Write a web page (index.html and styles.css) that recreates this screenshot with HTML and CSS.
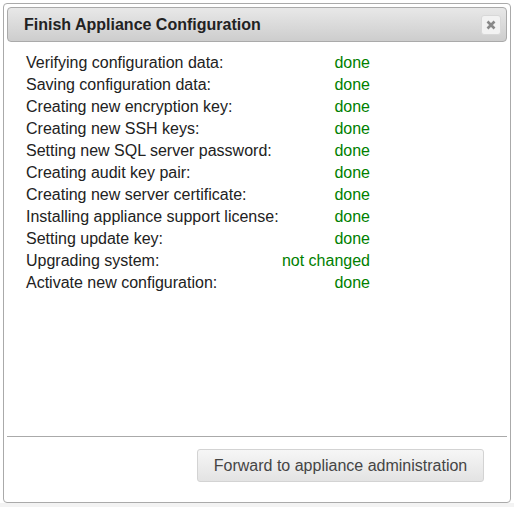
FILE: index.html
```html
<!DOCTYPE html>
<html>
<head>
<meta charset="utf-8">
<link rel="stylesheet" href="styles.css">
</head>
<body>
<div class="dialog">
  <div class="titlebar">
    <span class="title">Finish Appliance Configuration</span>
    <button class="close" aria-label="close">
      <svg width="10" height="10" viewBox="0 0 10 10"><path d="M1.5 1.5 L8.5 8.5 M8.5 1.5 L1.5 8.5" stroke="#888" stroke-width="2.6" stroke-linecap="butt"/></svg>
    </button>
  </div>
  <div class="content">
    <table class="steps">
      <tr><td class="label">Verifying configuration data:</td><td class="status">done</td></tr>
      <tr><td class="label">Saving configuration data:</td><td class="status">done</td></tr>
      <tr><td class="label">Creating new encryption key:</td><td class="status">done</td></tr>
      <tr><td class="label">Creating new SSH keys:</td><td class="status">done</td></tr>
      <tr><td class="label">Setting new SQL server password:</td><td class="status">done</td></tr>
      <tr><td class="label">Creating audit key pair:</td><td class="status">done</td></tr>
      <tr><td class="label">Creating new server certificate:</td><td class="status">done</td></tr>
      <tr><td class="label">Installing appliance support license:</td><td class="status">done</td></tr>
      <tr><td class="label">Setting update key:</td><td class="status">done</td></tr>
      <tr><td class="label">Upgrading system:</td><td class="status">not changed</td></tr>
      <tr><td class="label">Activate new configuration:</td><td class="status">done</td></tr>
    </table>
  </div>
  <div class="buttonpane">
    <button class="btn">Forward to appliance administration</button>
  </div>
</div>
</body>
</html>
```
FILE: styles.css
```css
html, body {
  margin: 0;
  padding: 0;
}
body {
  width: 514px;
  height: 507px;
  background: linear-gradient(to bottom, #fff 503px, #f3f3f3 503px);
  font-family: "Liberation Sans", Arial, sans-serif;
  overflow: hidden;
}
.dialog {
  box-sizing: border-box;
  margin: 3px 0 0 3px;
  width: 508px;
  height: 500px;
  border: 1px solid #aaa;
  border-radius: 4px;
  background: #fff;
  padding: 3px;
  display: flex;
  flex-direction: column;
}
.titlebar {
  box-sizing: border-box;
  height: 35px;
  border: 1px solid #aaa;
  border-radius: 4px;
  background: linear-gradient(to bottom, #e8e8e8, #cdcdcd);
  display: flex;
  align-items: center;
  justify-content: space-between;
  padding: 0 5px 0 16px;
}
.title {
  font-weight: bold;
  font-size: 16px;
  color: #222;
}
.close {
  box-sizing: border-box;
  width: 20px;
  height: 20px;
  border: 1px solid #d8d8d8;
  border-radius: 3px;
  background: #f2f2f2;
  padding: 0;
  display: flex;
  align-items: center;
  justify-content: center;
}
.content {
  flex: 1;
  padding: 10px 0 0 19px;
}
.steps {
  border-collapse: collapse;
  font-size: 16px;
  color: #222;
}
.steps td {
  padding: 0;
  height: 22px;
  line-height: 22px;
}
.label {
  width: 255px;
}
.status {
  width: 89px;
  text-align: right;
  color: #008000;
}
.buttonpane {
  border-top: 1px solid #aaa;
  height: 63px;
  display: flex;
  justify-content: flex-end;
  align-items: flex-start;
  padding: 12px 23px 0 0;
  box-sizing: border-box;
}
.btn {
  box-sizing: border-box;
  height: 33px;
  width: 287px;
  border: 1px solid #d3d3d3;
  border-radius: 3px;
  background: linear-gradient(to bottom, #f6f6f6, #e3e3e3);
  font-family: "Liberation Sans", Arial, sans-serif;
  font-size: 16px;
  color: #454545;
  padding: 0;
}
```
